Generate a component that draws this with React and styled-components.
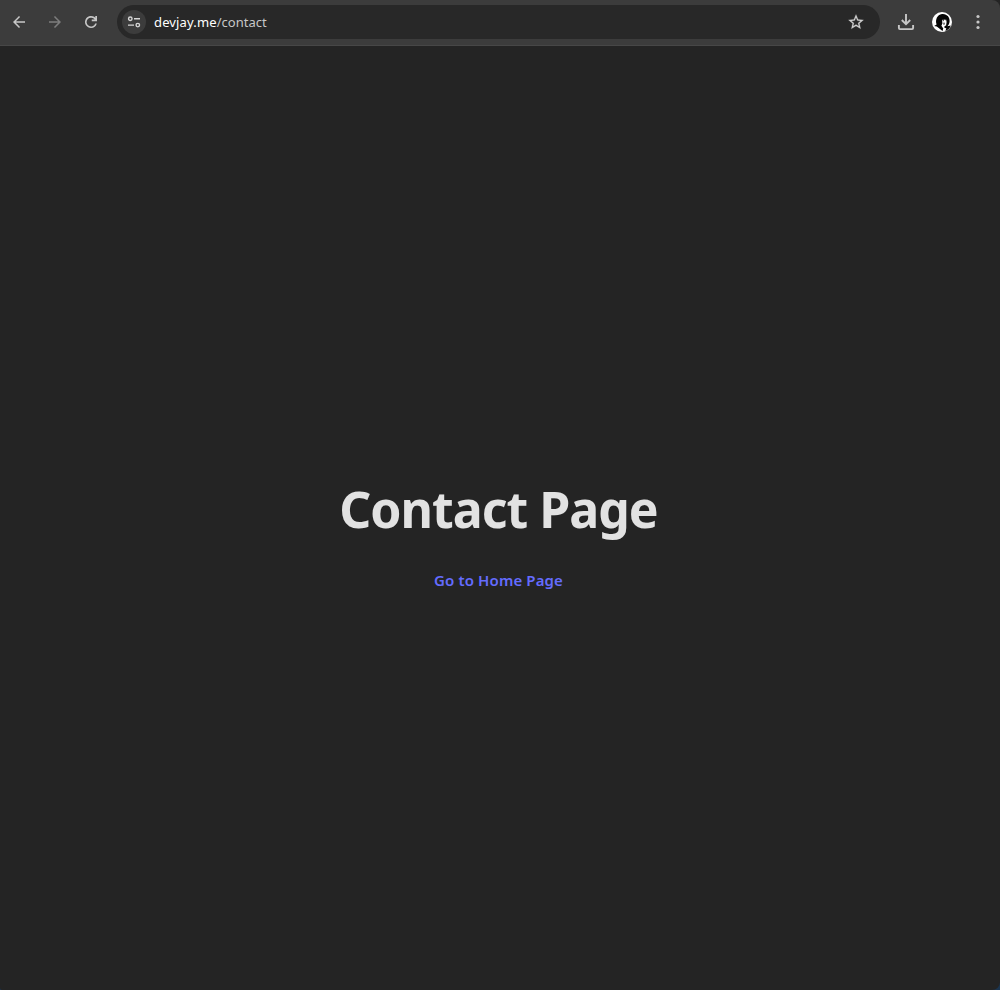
import React from "react";
import styled, { createGlobalStyle } from "styled-components";

const GlobalStyle = createGlobalStyle`
  * { box-sizing: border-box; }
  body {
    margin: 0;
    background: linear-gradient(#242424 50%, #1b3550);
    font-family: "Noto Sans", "Open Sans", sans-serif;
  }
`;

const Window = styled.div`
  height: 100vh;
  display: flex;
  flex-direction: column;
  background: #242424;
  border-radius: 0 8px 8px 2px;
  overflow: hidden;
`;

const Toolbar = styled.header`
  flex: none;
  height: 46px;
  display: flex;
  align-items: center;
  padding: 0 8px 2px 5px;
  background: #3c3c3c;
  border-bottom: 1px solid #474747;
`;

const IconButton = styled.button`
  flex: none;
  width: 28px;
  height: 28px;
  margin-right: 8px;
  padding: 0;
  border: 0;
  background: none;
  display: grid;
  place-items: center;
  color: ${(p) => (p.$dim ? "#7d7d7d" : "#c7c7c7")};
  &:last-child { margin-right: 0; }
`;

const AddressBar = styled.div`
  flex: 1;
  height: 34px;
  margin: 0 12px 0 4px;
  padding: 0 10px 0 5px;
  border-radius: 17px;
  background: #282828;
  display: flex;
  align-items: center;
`;

const SiteInfo = styled.span`
  width: 24px;
  height: 24px;
  border-radius: 50%;
  background: #3c3c3c;
  color: #d6d6d6;
  display: grid;
  place-items: center;
`;

const Url = styled.span`
  flex: 1;
  margin-left: 8px;
  font-size: 13px;
  line-height: 18px;
  letter-spacing: 0.02px;
  color: #c7c7c7;
`;

const Host = styled.span`
  color: #ffffff;
  letter-spacing: 0.14px;
`;

const Star = styled.span`
  display: grid;
  place-items: center;
  width: 28px;
  height: 28px;
  color: #d0d0d0;
`;

const Page = styled.main`
  flex: 1;
  display: flex;
  flex-direction: column;
  align-items: center;
  padding: 435px 3px 0 0;
`;

const Title = styled.h1`
  margin: 0;
  font-size: 50px;
  line-height: 56px;
  font-weight: 700;
  letter-spacing: -1px;
  color: #e2e2e2;
`;

const HomeLink = styled.a`
  margin-top: 31px;
  font-size: 15px;
  line-height: 24px;
  font-weight: 600;
  letter-spacing: 0.12px;
  color: #646cff;
  text-decoration: none;
`;

const Glyph = ({ d, weight = 0 }) => (
  <svg width="18" height="18" viewBox="0 0 24 24" fill="currentColor" stroke="currentColor" strokeWidth={weight}>
    <path d={d} />
  </svg>
);

const BACK = "M20 11H7.83l5.59-5.59L12 4l-8 8 8 8 1.41-1.41L7.83 13H20v-2z";
const FORWARD = "M4 11h12.17l-5.59-5.59L12 4l8 8-8 8-1.41-1.41L16.17 13H4v-2z";
const RELOAD =
  "M12 20a8 8 0 1 1 5.75-13.55V4h2.25v7h-7V8.75h3.95A5.9 5.9 0 1 0 17.65 14h2.08A8 8 0 0 1 12 20z";
const STAR =
  "M22 9.24l-7.19-.62L12 2 9.19 8.63 2 9.24l5.46 4.73L5.82 21 12 17.27 18.18 21l-1.63-7.03L22 9.24zM12 15.4l-3.76 2.27 1-4.28-3.32-2.88 4.38-.38L12 6.1l1.71 4.04 4.38.38-3.32 2.88 1 4.28L12 15.4z";

const TuneIcon = () => (
  <svg width="14" height="14" viewBox="0 0 14 14" fill="none" stroke="currentColor" strokeWidth="1.4">
    <circle cx="3.3" cy="3.7" r="1.75" />
    <path d="M7 3.7h6M1 10.1h6" />
    <circle cx="10.8" cy="10.1" r="1.75" />
  </svg>
);

const DownloadIcon = () => (
  <svg width="18" height="18" viewBox="0 0 18 18" fill="none" stroke="currentColor" strokeWidth="1.9">
    <path d="M9 1v10M4.8 7L9 11.2 13.2 7M1.9 12v3.1q0 1 1 1h12.2q1 0 1-1V12" />
  </svg>
);

const Avatar = () => (
  <svg width="20" height="20" viewBox="0 0 20 20">
    <circle cx="10" cy="10" r="10" fill="#fff" />
    <path
      fill="#050505"
      d="M4.6 12.4C3 8 5 2.8 10 2c5-.5 8 3.4 7.6 7.6-.2 2-1 3.6-2.2 4.6l3.4-.6c-.9 2.5-2.6 4.3-4.6 5.2l-1.6-.4-1.8.8-2.2-1.7-3.8-3-2.6-.5z"
    />
    <path
      fill="#fff"
      d="M10 7.2l1.5 2.2.4-2.4 1.4 1.6.7-1.6.6 3-.5 3.4-1.4.6-.5 1.4 2.2 1.2-1.3 2.6-2.8.6 1-3.4-1.9-2.6 1-2.2z"
    />
    <path fill="#050505" d="M11.6 10.4l1 .3-.2 2-1-.3z" />
  </svg>
);

const MenuIcon = () => (
  <svg width="18" height="18" viewBox="0 0 18 18" fill="currentColor">
    <circle cx="9" cy="3.5" r="1.6" />
    <circle cx="9" cy="9" r="1.6" />
    <circle cx="9" cy="14.5" r="1.6" />
  </svg>
);

export default function App() {
  return (
    <>
      <GlobalStyle />
      <Window>
        <Toolbar>
          <IconButton aria-label="Back"><Glyph d={BACK} /></IconButton>
          <IconButton $dim aria-label="Forward"><Glyph d={FORWARD} /></IconButton>
          <IconButton aria-label="Reload"><Glyph d={RELOAD} /></IconButton>
          <AddressBar>
            <SiteInfo><TuneIcon /></SiteInfo>
            <Url><Host>devjay.me</Host>/contact</Url>
            <Star><Glyph d={STAR} weight={0.3} /></Star>
          </AddressBar>
          <IconButton aria-label="Downloads"><DownloadIcon /></IconButton>
          <IconButton aria-label="Profile"><Avatar /></IconButton>
          <IconButton aria-label="Menu"><MenuIcon /></IconButton>
        </Toolbar>
        <Page>
          <Title>Contact Page</Title>
          <HomeLink href="#">Go to Home Page</HomeLink>
        </Page>
      </Window>
    </>
  );
}
